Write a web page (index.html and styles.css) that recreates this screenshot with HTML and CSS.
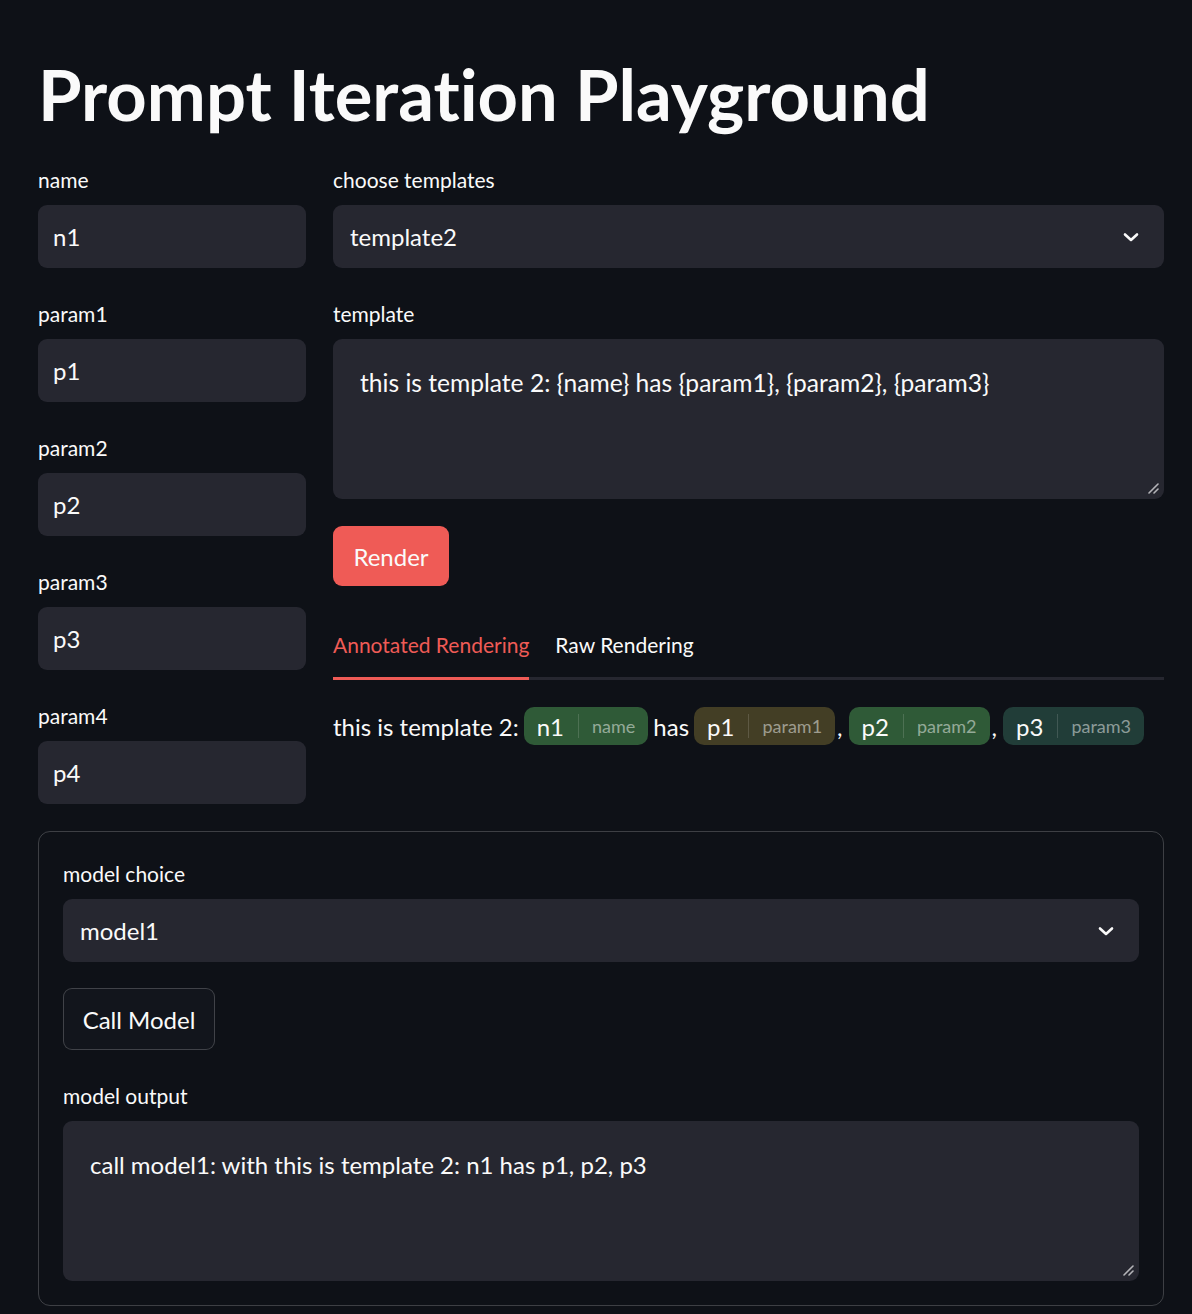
FILE: index.html
```html
<!DOCTYPE html>
<html>
<head>
<meta charset="utf-8">
<link rel="stylesheet" href="styles.css">
</head>
<body>
<main class="app">
  <h1 class="title">Prompt Iteration Playground</h1>
  <div class="columns">
    <div class="col-left">
      <div class="field"><div class="label">name</div><div class="input">n1</div></div>
      <div class="field"><div class="label">param1</div><div class="input">p1</div></div>
      <div class="field"><div class="label">param2</div><div class="input">p2</div></div>
      <div class="field"><div class="label">param3</div><div class="input">p3</div></div>
      <div class="field"><div class="label">param4</div><div class="input">p4</div></div>
    </div>
    <div class="col-right">
      <div class="field">
        <div class="label">choose templates</div>
        <div class="select"><span>template2</span>
          <svg class="chev" width="18" height="12" viewBox="0 0 18 12"><path d="M3 3.5 L9 9 L15 3.5" fill="none" stroke="#fafafa" stroke-width="2.6" stroke-linecap="round" stroke-linejoin="round"/></svg>
        </div>
      </div>
      <div class="field">
        <div class="label">template</div>
        <div class="textarea">this is template 2: {name} has {param1}, {param2}, {param3}
          <svg class="grip" width="12" height="12" viewBox="0 0 12 12"><path d="M11 2 L2 11 M11 7 L7 11" stroke="#b4b4b8" stroke-width="1.6" stroke-linecap="round"/></svg>
        </div>
      </div>
      <button class="btn-primary">Render</button>
      <div class="tabs">
        <div class="tab active">Annotated Rendering</div>
        <div class="tab">Raw Rendering</div>
      </div>
      <div class="annotated">
        <span>this is template 2:</span>
        <span class="chip green"><span class="val">n1</span><span class="sep"></span><span class="tag">name</span></span>
        <span>has</span>
        <span class="chip brown"><span class="val">p1</span><span class="sep"></span><span class="tag">param1</span></span><span class="comma">,</span>
        <span class="chip green"><span class="val">p2</span><span class="sep"></span><span class="tag">param2</span></span><span class="comma">,</span>
        <span class="chip teal"><span class="val">p3</span><span class="sep"></span><span class="tag">param3</span></span>
      </div>
    </div>
  </div>
  <section class="box">
    <div class="field">
      <div class="label">model choice</div>
      <div class="select"><span>model1</span>
        <svg class="chev" width="18" height="12" viewBox="0 0 18 12"><path d="M3 3.5 L9 9 L15 3.5" fill="none" stroke="#fafafa" stroke-width="2.6" stroke-linecap="round" stroke-linejoin="round"/></svg>
      </div>
    </div>
    <button class="btn-secondary">Call Model</button>
    <div class="field">
      <div class="label">model output</div>
      <div class="textarea output">call model1: with this is template 2: n1 has p1, p2, p3
        <svg class="grip" width="12" height="12" viewBox="0 0 12 12"><path d="M11 2 L2 11 M11 7 L7 11" stroke="#b4b4b8" stroke-width="1.6" stroke-linecap="round"/></svg>
      </div>
    </div>
  </section>
</main>
</body>
</html>
```

FILE: styles.css
```css
* { box-sizing: border-box; }
html, body {
  margin: 0;
  background: #0e1117;
  color: #fafafa;
  font-family: Lato, "Noto Sans", sans-serif;
  font-variant-ligatures: none;
}
.app {
  padding: 0 28px 0 38px;
  height: 1314px;
  overflow: hidden;
}
.title {
  margin: 0;
  padding-top: 52px;
  height: 168px;
  font-size: 70.5px;
  font-weight: 700;
  line-height: 84px;
}
.columns {
  display: grid;
  grid-template-columns: 268px 1fr;
  column-gap: 27px;
}
.col-left, .col-right {
  display: flex;
  flex-direction: column;
}
.col-left { gap: 34px; }
.field {
  display: flex;
  flex-direction: column;
}
.col-right .field + .field { margin-top: 34px; }
.label {
  font-size: 21px;
  line-height: 24px;
  height: 24px;
  margin-bottom: 13px;
}
.input {
  height: 63px;
  background: #262730;
  border-radius: 9px;
  padding: 0 15px;
  display: flex;
  align-items: center;
  font-size: 24px;
}
.select {
  height: 63px;
  background: #262730;
  border-radius: 9px;
  padding: 0 24px 0 17px;
  display: flex;
  align-items: center;
  justify-content: space-between;
  font-size: 24px;
}
.chev { display: block; }
.textarea {
  position: relative;
  height: 160px;
  background: #262730;
  border-radius: 9px;
  padding: 29px 27px;
  font-size: 24.6px;
  line-height: 30px;
}
.textarea.output { font-size: 24px; }
.grip {
  position: absolute;
  right: 5px;
  bottom: 5px;
}
.btn-primary {
  margin-top: 27px;
  align-self: flex-start;
  width: 116px;
  height: 60px;
  background: #ef5b56;
  border: none;
  border-radius: 9px;
  color: #fafafa;
  font-family: inherit;
  font-size: 24px;
  padding: 0;
}
.tabs {
  margin-top: 26px;
  display: flex;
  gap: 26px;
  border-bottom: 3px solid #262730;
  height: 68px;
}
.tab {
  font-size: 21px;
  line-height: 65px;
  height: 68px;
  margin-bottom: -3px;
  border-bottom: 3px solid transparent;
}
.tab.active {
  color: #ef5b56;
  border-bottom-color: #ef5b56;
}
.annotated {
  margin-top: 27px;
  display: flex;
  align-items: center;
  font-size: 24px;
  height: 38px;
  white-space: nowrap;
}
.annotated > span { margin-right: 5px; }
.annotated > .comma { margin-left: -3px; margin-right: 6px; }
.chip {
  display: inline-flex;
  align-items: center;
  height: 38px;
  border-radius: 10px;
  padding: 0 13px 0 13px;
}
.chip .val { font-size: 24px; }
.chip .sep {
  width: 1px;
  height: 24px;
  background: rgba(250,250,250,0.15);
  margin: 0 13px 0 14px;
}
.chip .tag {
  font-size: 18px;
  color: rgba(250,250,250,0.5);
}
.green { background: #2f5a37; }
.brown { background: #433e25; }
.teal { background: #213d38; }
.box {
  margin-top: 27px;
  border: 1px solid rgba(250,250,250,0.2);
  border-radius: 12px;
  padding: 30px 24px 24px 24px;
  display: flex;
  flex-direction: column;
}
.btn-secondary {
  margin-top: 26px;
  align-self: flex-start;
  width: 152px;
  height: 62px;
  background: #12151c;
  border: 1px solid rgba(250,250,250,0.2);
  border-radius: 9px;
  color: #fafafa;
  font-family: inherit;
  font-size: 24px;
  padding: 0;
}
.box .btn-secondary + .field { margin-top: 34px; }
```
